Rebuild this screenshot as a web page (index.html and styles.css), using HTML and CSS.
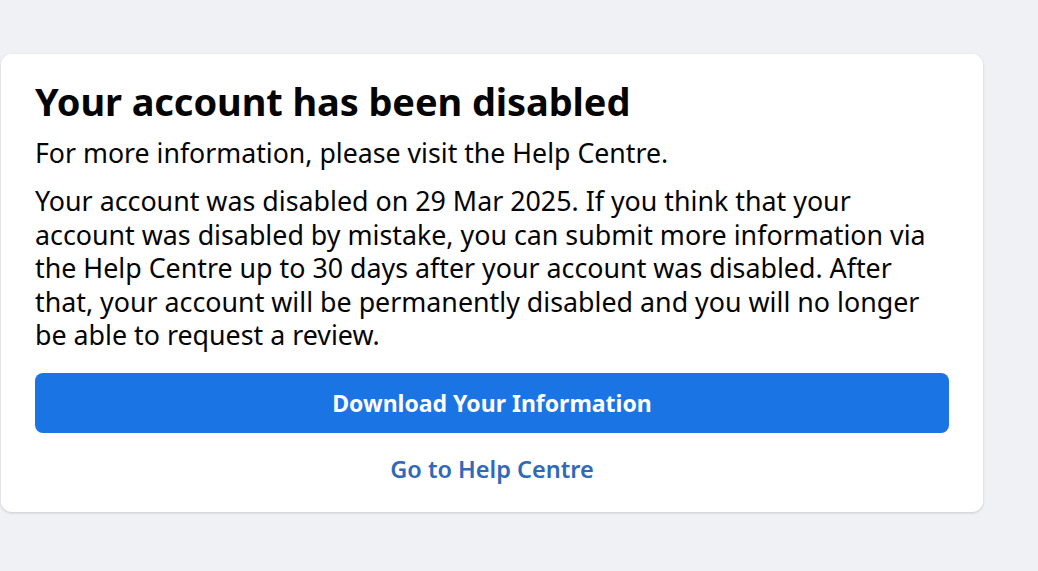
FILE: index.html
```html
<!DOCTYPE html>
<html lang="en">
<head>
<meta charset="utf-8">
<title>Your account has been disabled</title>
<link rel="stylesheet" href="styles.css">
</head>
<body>
<main class="card">
  <h1 class="title">Your account has been disabled</h1>
  <p class="lead">For more information, please visit the Help Centre.</p>
  <p class="body">Your account was disabled on 29 Mar 2025. If you think that your<br>account was disabled by mistake, you can submit more information via<br>the Help Centre up to 30 days after your account was disabled. After<br>that, your account will be permanently disabled and you will no longer<br>be able to request a review.</p>
  <div class="actions">
    <button class="primary" type="button">Download Your Information</button>
    <a class="link" href="#">Go to Help Centre</a>
  </div>
</main>
</body>
</html>
```

FILE: styles.css
```css
html, body {
  margin: 0;
  padding: 0;
}
body {
  background: #eff1f4;
  font-family: "Noto Sans", "Open Sans", Arial, sans-serif;
  color: #050505;
  width: 1038px;
  height: 571px;
  overflow: hidden;
}
.card {
  box-sizing: border-box;
  margin: 54px 0 0 1px;
  width: 982px;
  background: #ffffff;
  border-radius: 11px;
  box-shadow: 0 1px 3px rgba(0, 0, 0, 0.16);
  padding: 23px 34px 27px 34px;
}
.title {
  margin: 0;
  font-size: 38px;
  font-weight: 700;
  line-height: 48px;
  letter-spacing: -0.1px;
}
.lead {
  margin: 11px 0 0 0;
  font-size: 26.7px;
  line-height: 34px;
}
.body {
  margin: 14px 0 0 0;
  font-size: 26.8px;
  line-height: 33.5px;
}
.actions {
  margin-top: 21px;
  display: flex;
  flex-direction: column;
  align-items: stretch;
}
.primary {
  height: 60px;
  border: none;
  border-radius: 8px;
  background: #1b74e4;
  color: #ffffff;
  font-family: inherit;
  font-size: 23px;
  font-weight: 700;
  padding: 0;
}
.link {
  margin-top: 20px;
  align-self: center;
  color: #3069b8;
  text-decoration: none;
  font-size: 23.5px;
  font-weight: 600;
  line-height: 32px;
}
```
